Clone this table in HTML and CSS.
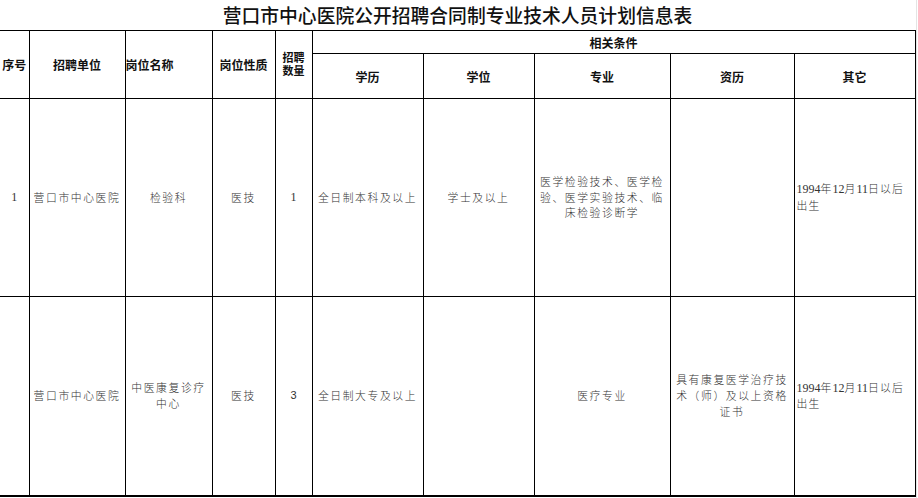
FILE: index.html
```html
<!DOCTYPE html>
<html lang="zh-CN">
<head>
<meta charset="utf-8">
<title>营口市中心医院公开招聘合同制专业技术人员计划信息表</title>
<link rel="stylesheet" href="styles.css">
</head>
<body>
<div class="page">
  <h1 class="title">营口市中心医院公开招聘合同制专业技术人员计划信息表</h1>
  <table class="plan">
    <colgroup>
      <col class="c-no"><col class="c-unit"><col class="c-post"><col class="c-kind"><col class="c-num">
      <col class="c-edu"><col class="c-deg"><col class="c-major"><col class="c-qual"><col class="c-other">
    </colgroup>
    <thead>
      <tr class="h1">
        <th rowspan="2" class="first">序号</th>
        <th rowspan="2">招聘单位</th>
        <th rowspan="2" class="left">岗位名称</th>
        <th rowspan="2">岗位性质</th>
        <th rowspan="2" class="tight"><span class="ln">招聘</span><span class="ln">数量</span></th>
        <th colspan="5">相关条件</th>
      </tr>
      <tr class="h2">
        <th>学历</th>
        <th>学位</th>
        <th>专业</th>
        <th>资历</th>
        <th>其它</th>
      </tr>
    </thead>
    <tbody>
      <tr class="r1">
        <td class="first serif">1</td>
        <td>营口市中心医院</td>
        <td>检验科</td>
        <td>医技</td>
        <td class="serif">1</td>
        <td>全日制本科及以上</td>
        <td>学士及以上</td>
        <td>医学检验技术、医学检<br>验、医学实验技术、临<br>床检验诊断学</td>
        <td></td>
        <td class="left other"><span class="digits">1994</span>年<span class="digits">12</span>月<span class="digits">11</span>日以后<br>出生</td>
      </tr>
      <tr class="r2">
        <td class="first"></td>
        <td>营口市中心医院</td>
        <td>中医康复诊疗<br>中心</td>
        <td>医技</td>
        <td class="sans">3</td>
        <td>全日制大专及以上</td>
        <td></td>
        <td>医疗专业</td>
        <td>具有康复医学治疗技<br>术（师）及以上资格<br>证书</td>
        <td class="left other"><span class="digits">1994</span>年<span class="digits">12</span>月<span class="digits">11</span>日以后<br>出生</td>
      </tr>
    </tbody>
  </table>
</div>
</body>
</html>
```

FILE: styles.css
```css
html, body {
  margin: 0;
  padding: 0;
  background: #ffffff;
}

.page {
  width: 916px;
  height: 498px;
  overflow: hidden;
  border-right: 1px solid #e4e4e4;
  font-family: "Noto Sans CJK SC", "Liberation Sans", sans-serif;
  color: #000;
}

.title {
  width: 915px;
  height: 30px;
  margin: 0;
  font-size: 18.8px;
  font-weight: 500;
  line-height: 30px;
  text-align: center;
  color: #111;
}

.plan {
  width: 915px;
  border-collapse: collapse;
  table-layout: fixed;
}

.c-no { width: 29px; }
.c-unit { width: 96px; }
.c-post { width: 87px; }
.c-kind { width: 63px; }
.c-num { width: 37px; }
.c-edu { width: 111px; }
.c-deg { width: 111px; }
.c-major { width: 136px; }
.c-qual { width: 124px; }
.c-other { width: 121px; }

.plan th,
.plan td {
  border: 1px solid #000;
  padding: 0;
  text-align: center;
  vertical-align: middle;
  overflow: hidden;
}

.plan .first {
  border-left: none;
}

.plan th {
  font-size: 12px;
  font-weight: 700;
  line-height: 13px;
  color: #111;
}

.plan th.tight .ln {
  display: block;
  height: 13px;
  line-height: 13px;
  font-family: "Liberation Sans", "Noto Sans CJK SC", sans-serif;
  font-size: 11px;
}

.plan th.left,
.plan td.left {
  text-align: left;
}

.h1 { height: 23px; }
.h2 { height: 45px; }
.r1 { height: 198px; }
.r2 { height: 199px; }

.plan tbody tr:last-child td {
  border-bottom: 2px solid #000;
}

.plan td {
  font-size: 10.8px;
  font-weight: 300;
  line-height: 15.6px;
  letter-spacing: 1.6px;
  color: #333;
  white-space: nowrap;
}

.plan td.serif {
  font-family: "Liberation Serif", serif;
  font-size: 12px;
  font-weight: 400;
  letter-spacing: 0;
}

.plan td.sans {
  font-family: "Liberation Sans", sans-serif;
  font-size: 11px;
  font-weight: 400;
  letter-spacing: 0;
}

.plan td.other {
  padding-left: 2px;
  letter-spacing: 1.2px;
}

.digits {
  font-family: "Liberation Serif", serif;
  font-size: 12px;
  font-weight: 400;
  letter-spacing: 0;
}
```
